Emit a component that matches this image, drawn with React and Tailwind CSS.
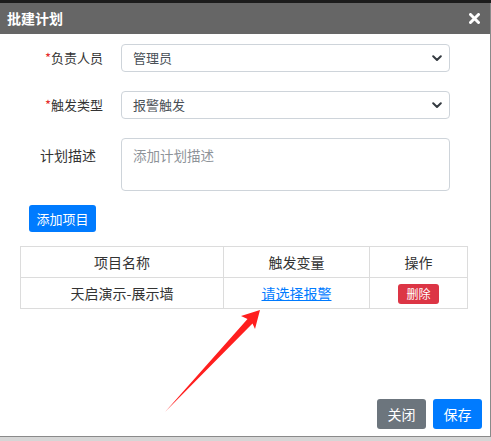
import React from "react";

const font = { fontFamily: '"Noto Sans CJK SC", "Microsoft YaHei", sans-serif' };

function Chevron() {
  return (
    <svg width="10" height="7" viewBox="0 0 10 7" className="shrink-0">
      <path d="M1.2 1.3 L5 5 L8.8 1.3" fill="none" stroke="#343a40" strokeWidth="2" strokeLinecap="round" strokeLinejoin="round" />
    </svg>
  );
}

function SelectBox({ value }) {
  return (
    <div className="flex h-[28px] w-[329px] items-center justify-between rounded-[4px] border border-[#ced4da] bg-white pl-[11px] pr-[7px] text-[13px] text-[#495057]">
      <span>{value}</span>
      <Chevron />
    </div>
  );
}

export default function App() {
  return (
    <div className="relative flex h-[441px] w-[491px] flex-col overflow-hidden bg-[#d6d6d6]" style={font}>
      <div className="h-[3px] shrink-0 bg-[#1c1c1c]" />
      <div className="flex h-[434px] shrink-0 flex-col border-b border-r border-[#8a8a8a] bg-white">
        <div className="flex h-[31px] shrink-0 items-center justify-between bg-[#666666] pl-[7px] pr-[10px]">
          <span className="text-[14px] font-bold text-white">批建计划</span>
          <svg width="11" height="11" viewBox="0 0 11 11">
            <path d="M1.5 1.5 L9.5 9.5 M9.5 1.5 L1.5 9.5" stroke="#ffffff" strokeWidth="3" strokeLinecap="round" />
          </svg>
        </div>

        <div className="flex flex-1 flex-col">
          <div className="mt-[10px] flex items-center">
            <div className="w-[121px] pl-[45px] text-[13px] text-[#333]">
              <span className="text-[#e52c2c]">*</span>负责人员
            </div>
            <SelectBox value="管理员" />
          </div>

          <div className="mt-[19px] flex items-center">
            <div className="w-[121px] pl-[45px] text-[13px] text-[#333]">
              <span className="text-[#e52c2c]">*</span>触发类型
            </div>
            <SelectBox value="报警触发" />
          </div>

          <div className="mt-[19px] flex items-start">
            <div className="w-[121px] pl-[40px] pt-[7px] text-[14px] text-[#333]">计划描述</div>
            <div className="h-[53px] w-[329px] rounded-[4px] border border-[#ced4da] px-[11px] pt-[6px] text-[13.5px] text-[#8e9399]">
              添加计划描述
            </div>
          </div>

          <div className="mt-[14px] pl-[29px]">
            <div className="flex h-[27px] w-[67px] items-center justify-center rounded-[3px] bg-[#007bff] text-[13px] text-white">
              添加项目
            </div>
          </div>

          <div className="mt-[14px] pl-[20px]">
            <table className="w-[448px] border-collapse text-[14px] text-[#333]">
              <tbody>
                <tr className="h-[31px]">
                  <td className="w-[203px] border border-[#dcdcdc] text-center">项目名称</td>
                  <td className="w-[146px] border border-[#dcdcdc] text-center">触发变量</td>
                  <td className="border border-[#dcdcdc] text-center">操作</td>
                </tr>
                <tr className="h-[31px]">
                  <td className="border border-[#dcdcdc] text-center">天启演示-展示墙</td>
                  <td className="border border-[#dcdcdc] text-center">
                    <span className="text-[#007bff] underline">请选择报警</span>
                  </td>
                  <td className="border border-[#dcdcdc] text-center">
                    <span className="inline-flex h-[20px] w-[41px] items-center justify-center rounded-[3px] bg-[#dc3545] text-[12px] text-white align-middle">
                      删除
                    </span>
                  </td>
                </tr>
              </tbody>
            </table>
          </div>

          <div className="mt-auto mb-[7px] flex justify-end gap-[7px] pr-[8px]">
            <div className="flex h-[30px] w-[49px] items-center justify-center rounded-[3px] bg-[#6c757d] text-[14px] text-white">
              关闭
            </div>
            <div className="flex h-[30px] w-[49px] items-center justify-center rounded-[3px] bg-[#007bff] text-[14px] text-white">
              保存
            </div>
          </div>
        </div>
      </div>

      <svg className="pointer-events-none absolute left-0 top-0" width="491" height="441" viewBox="0 0 491 441">
        <polygon points="260,310 241,316 247.5,319 165,412 252.5,323.5 255,329" fill="#ff1f1f" />
      </svg>
    </div>
  );
}
